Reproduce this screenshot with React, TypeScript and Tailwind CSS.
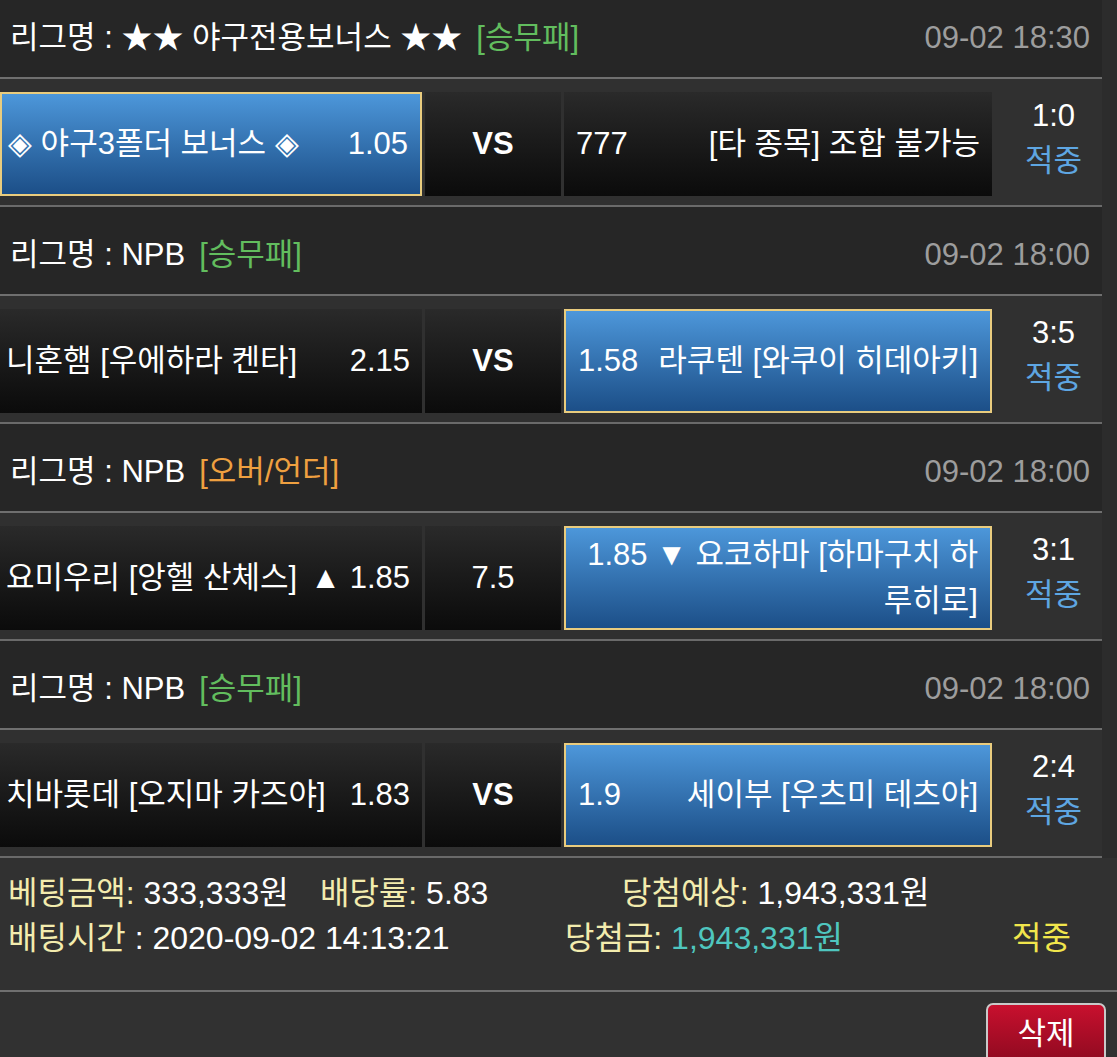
import React from 'react'

type Side = { odds: string; name: React.ReactNode; active?: boolean; oddsFirst?: boolean }

type Match = {
  league: string
  type: string
  typeColor: string
  date: string
  left: Side
  mid: string
  midBold?: boolean
  right: Side
  score: string
}

const matches: Match[] = [
  {
    league: '★★ 야구전용보너스 ★★',
    type: '[승무패]',
    typeColor: 'text-[#62bd5e]',
    date: '09-02 18:30',
    left: { odds: '1.05', name: '◈ 야구3폴더 보너스 ◈', active: true },
    mid: 'VS',
    midBold: true,
    right: { odds: '777', name: '[타 종목] 조합 불가능', oddsFirst: true },
    score: '1:0',
  },
  {
    league: 'NPB',
    type: '[승무패]',
    typeColor: 'text-[#62bd5e]',
    date: '09-02 18:00',
    left: { odds: '2.15', name: '니혼햄 [우에하라 켄타]' },
    mid: 'VS',
    midBold: true,
    right: { odds: '1.58', name: '라쿠텐 [와쿠이 히데아키]', oddsFirst: true, active: true },
    score: '3:5',
  },
  {
    league: 'NPB',
    type: '[오버/언더]',
    typeColor: 'text-[#efa040]',
    date: '09-02 18:00',
    left: { odds: '▲ 1.85', name: '요미우리 [앙헬 산체스]' },
    mid: '7.5',
    right: {
      odds: '',
      name: (
        <>
          <span className="whitespace-nowrap">1.85 ▼ 요코하마 [하마구치 하</span>
          <br />
          <span className="whitespace-nowrap">루히로]</span>
        </>
      ),
      oddsFirst: true,
      active: true,
    },
    score: '3:1',
  },
  {
    league: 'NPB',
    type: '[승무패]',
    typeColor: 'text-[#62bd5e]',
    date: '09-02 18:00',
    left: { odds: '1.83', name: '치바롯데 [오지마 카즈야]' },
    mid: 'VS',
    midBold: true,
    right: { odds: '1.9', name: '세이부 [우츠미 테츠야]', oddsFirst: true, active: true },
    score: '2:4',
  },
]

function Cell({ side, className }: { side: Side; className: string }) {
  const box = side.active
    ? 'bg-linear-to-b from-[#4d97da] to-[#1c4f88] border-2 border-[#e9cc7e]'
    : 'bg-linear-to-b from-[#2a2a2a] to-[#0b0b0b]'
  return (
    <div className={`${className} ${box} h-[104px] flex items-center justify-between gap-2 text-white`}>
      {side.oddsFirst ? (
        <>
          {side.odds && <span className="whitespace-nowrap">{side.odds}</span>}
          <span className="flex-1 text-right leading-[46px]">{side.name}</span>
        </>
      ) : (
        <>
          <span className="whitespace-nowrap">{side.name}</span>
          <span className="whitespace-nowrap">{side.odds}</span>
        </>
      )}
    </div>
  )
}

function MatchBlock({ m, first }: { m: Match; first?: boolean }) {
  return (
    <div>
      <div
        className={`${first ? 'h-[79px]' : 'h-[89px] pt-[10px]'} bg-[#262626] border-b-2 border-[#6f6f6f] flex items-center justify-between pl-[10px] pr-[12px]`}
      >
        <div className="flex items-center text-white">
          <span>리그명 : {m.league}</span>
          <span className={`${m.typeColor} ml-[14px]`}>{m.type}</span>
        </div>
        <span className="text-[#9d9d9d]">{m.date}</span>
      </div>
      <div className="bg-[#303030] pt-[13px] pb-[9px] flex items-center gap-[3px] border-b-2 border-[#6a6a6a]">
        <Cell side={m.left} className="w-[422px] pl-[6px] pr-[12px]" />
        <div className="w-[136px] h-[104px] bg-linear-to-b from-[#2a2a2a] to-[#0b0b0b] flex items-center justify-center text-white">
          <span className={m.midBold ? 'font-bold' : ''}>{m.mid}</span>
        </div>
        <Cell side={m.right} className="w-[428px] pl-[12px] pr-[12px]" />
        <div className="flex-1 flex flex-col items-center pl-[10px] pb-[12px] leading-[45px]">
          <span className="text-white">{m.score}</span>
          <span className="text-[#5ea6e2]">적중</span>
        </div>
      </div>
    </div>
  )
}

export default function App() {
  return (
    <div className="min-h-screen bg-[#2c2c2c] text-[31px] font-['Liberation_Sans','Noto_Sans_CJK_KR',sans-serif]">
      <div className="w-[1102px]">
        {matches.map((m, i) => (
          <MatchBlock key={i} m={m} first={i === 0} />
        ))}
      </div>
      <div className="bg-[#313131] border-b-2 border-[#707070] pt-[13px] pb-[29px] pl-[8px] text-[32px] leading-[45px]">
        <div className="flex">
          <span className="w-[312px]">
            <span className="text-[#f3ecae]">베팅금액:</span> <span className="text-white">333,333원</span>
          </span>
          <span className="w-[302px]">
            <span className="text-[#f3ecae]">배당률:</span> <span className="text-white">5.83</span>
          </span>
          <span>
            <span className="text-[#f3ecae]">당첨예상:</span> <span className="text-white">1,943,331원</span>
          </span>
        </div>
        <div className="flex">
          <span className="w-[557px]">
            <span className="text-[#f3ecae]">배팅시간</span> <span className="text-white">: 2020-09-02 14:13:21</span>
          </span>
          <span className="w-[447px]">
            <span className="text-[#f3ecae]">당첨금:</span> <span className="text-[#4fc6bf]">1,943,331원</span>
          </span>
          <span className="text-[#f1e64c]">적중</span>
        </div>
      </div>
      <div className="bg-[#313131] flex justify-end pr-[11px] pt-[11px] pb-[10px]">
        <button className="w-[120px] h-[62px] rounded-[7px] border-2 border-[#c9c9c9] bg-linear-to-b from-[#c8102e] to-[#8e0a20] text-white">
          삭제
        </button>
      </div>
    </div>
  )
}
